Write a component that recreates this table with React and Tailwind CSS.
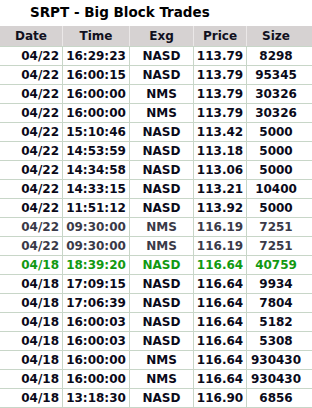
const ROWS = [
  ['04/22', '16:29:23', 'NASD', '113.79', '8298'],
  ['04/22', '16:00:15', 'NASD', '113.79', '95345'],
  ['04/22', '16:00:00', 'NMS', '113.79', '30326'],
  ['04/22', '16:00:00', 'NMS', '113.79', '30326'],
  ['04/22', '15:10:46', 'NASD', '113.42', '5000'],
  ['04/22', '14:53:59', 'NASD', '113.18', '5000'],
  ['04/22', '14:34:58', 'NASD', '113.06', '5000'],
  ['04/22', '14:33:15', 'NASD', '113.21', '10400'],
  ['04/22', '11:51:12', 'NASD', '113.92', '5000'],
  ['04/22', '09:30:00', 'NMS', '116.19', '7251', 'dim'],
  ['04/22', '09:30:00', 'NMS', '116.19', '7251', 'dim'],
  ['04/18', '18:39:20', 'NASD', '116.64', '40759', 'green'],
  ['04/18', '17:09:15', 'NASD', '116.64', '9934'],
  ['04/18', '17:06:39', 'NASD', '116.64', '7804'],
  ['04/18', '16:00:03', 'NASD', '116.64', '5182'],
  ['04/18', '16:00:03', 'NASD', '116.64', '5308'],
  ['04/18', '16:00:00', 'NMS', '116.64', '930430'],
  ['04/18', '16:00:00', 'NMS', '116.64', '930430'],
  ['04/18', '13:18:30', 'NASD', '116.90', '6856'],
]

const COLS = 'grid grid-cols-[63px_67px_64px_53px_58px]'

export default function App() {
  return (
    <div className="w-[312px] h-[408px] overflow-hidden bg-white font-['DejaVu_Sans',sans-serif] font-bold">
      {/* Title */}
      <div className="h-[26px] pl-[30px] pb-[2px] flex items-center text-[13.5px] text-black">
        SRPT - Big Block Trades
      </div>

      {/* Header */}
      <div className={`${COLS} h-[21px] bg-[#d6d2d2] text-[12px] text-[#101020] border-b border-[#c8d6c8]`}>
        {['Date', 'Time', 'Exg', 'Price', 'Size'].map((h, i) => (
          <div key={h} className={`flex items-center justify-center ${i < 4 ? 'border-r border-[#ebe8e8]' : ''}`}>
            {h}
          </div>
        ))}
      </div>

      {/* Rows */}
      {ROWS.map(([d, t, e, p, s, kind], i) => {
        const color = kind === 'green' ? 'text-[#119911]' : kind === 'dim' ? 'text-[#3a3a48]' : 'text-[#0a0a1a]'
        return (
          <div key={i} className={`${COLS} h-[19px] border-b border-[#c8d6c8] text-[12px] ${color}`}>
            <div className="flex items-center justify-end pr-[3px] border-r border-[#c8d6c8]">{d}</div>
            <div className="flex items-center justify-center border-r border-[#c8d6c8]">{t}</div>
            <div className="flex items-center justify-center border-r border-[#c8d6c8]">{e}</div>
            <div className="flex items-center justify-center border-r border-[#c8d6c8]">{p}</div>
            <div className="flex items-center justify-center">{s}</div>
          </div>
        )
      })}
    </div>
  )
}
